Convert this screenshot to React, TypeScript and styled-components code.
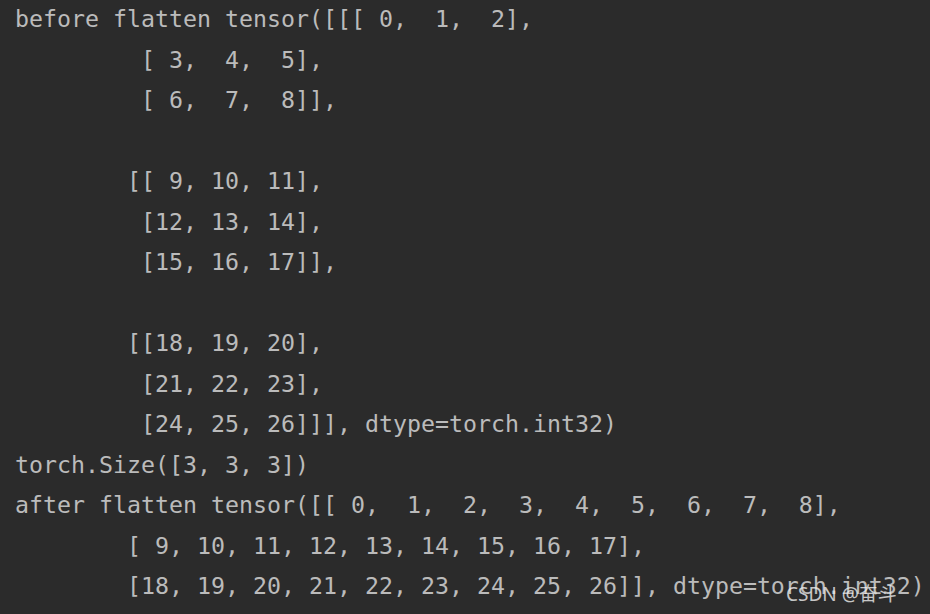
import React from "react";
import styled, { createGlobalStyle } from "styled-components";

const Global = createGlobalStyle`
  html, body { margin: 0; padding: 0; background: #2b2b2b; }
  #root { width: 930px; height: 614px; }
`;

const Console = styled.div`
  position: relative;
  width: 930px;
  height: 614px;
  overflow: hidden;
  background: #2b2b2b;
  box-sizing: border-box;
  padding: 0 0 0 15px;
`;

const Output = styled.pre`
  margin: -1px 0 0 0;
  font-family: "DejaVu Sans Mono", "Liberation Mono", monospace;
  font-size: 23.25px;
  line-height: 40.5px;
  color: #bbbbbb;
  white-space: pre;
`;

const Watermark = styled.div`
  position: absolute;
  left: 786px;
  top: 582px;
  font-family: "Noto Sans", "Noto Sans CJK SC", sans-serif;
  font-size: 19px;
  line-height: 24px;
  color: rgba(235, 235, 235, 0.82);
  white-space: nowrap;
`;

const lines = [
  "before flatten tensor([[[ 0,  1,  2],",
  "         [ 3,  4,  5],",
  "         [ 6,  7,  8]],",
  "",
  "        [[ 9, 10, 11],",
  "         [12, 13, 14],",
  "         [15, 16, 17]],",
  "",
  "        [[18, 19, 20],",
  "         [21, 22, 23],",
  "         [24, 25, 26]]], dtype=torch.int32)",
  "torch.Size([3, 3, 3])",
  "after flatten tensor([[ 0,  1,  2,  3,  4,  5,  6,  7,  8],",
  "        [ 9, 10, 11, 12, 13, 14, 15, 16, 17],",
  "        [18, 19, 20, 21, 22, 23, 24, 25, 26]], dtype=torch.int32)",
];

export default function App() {
  return (
    <>
      <Global />
      <Console>
        <Output>{lines.join("\n")}</Output>
        <Watermark>CSDN @奋斗</Watermark>
      </Console>
    </>
  );
}
